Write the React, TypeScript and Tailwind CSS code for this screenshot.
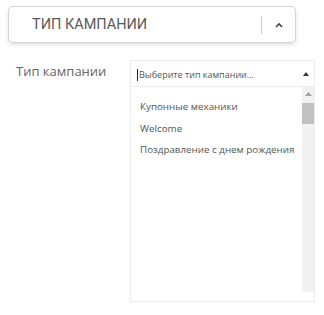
import { useState } from "react";

const options = [
  "Купонные механики",
  "Welcome",
  "Поздравление с днем рождения",
];

export default function App() {
  const [query, setQuery] = useState("");

  return (
    <div className="w-[324px] h-[315px] bg-white font-['Open_Sans',sans-serif] text-[#555]">
      {/* Заголовок секции */}
      <div className="pt-[6px] pl-[8px]">
        <div className="w-[288px] h-[37px] flex items-center border border-[#d4d4d4] rounded-[5px] shadow-[0_2px_4px_rgba(0,0,0,0.12)]">
          <span className="flex-1 pl-[23px] font-['Roboto',sans-serif] text-[14.5px] text-[#5a5a5a]">
            ТИП КАМПАНИИ
          </span>
          <div className="w-px h-[18px] bg-[#ccc]" />
          <div className="w-[33px] flex justify-center">
            <svg width="8" height="6" viewBox="0 0 8 6">
              <path d="M1 5 L4 2 L7 5" fill="none" stroke="#444" strokeWidth="1.6" />
            </svg>
          </div>
        </div>
      </div>

      {/* Поле и выпадающий список */}
      <div className="flex mt-[17px]">
        <div className="w-[130px] pl-[16px] pt-[2px] text-[13px] text-[#666]">
          Тип кампании
        </div>
        <div className="w-[185px] h-[242px] border border-[#ececec] flex flex-col">
          <div className="h-[26px] flex items-center border-b border-[#ececec] shrink-0">
            <input
              value={query}
              onChange={(e) => setQuery(e.target.value)}
              placeholder="Выберите тип кампании..."
              className="flex-1 min-w-0 ml-[6px] pl-[1px] text-[9px] outline-none placeholder:text-[#555] border-l border-[#222] h-[12px] leading-[12px] mt-[2px]"
            />
            <div className="w-[14px] flex justify-center mr-[1px]">
              <svg width="6" height="4" viewBox="0 0 6 4">
                <path d="M0 4 L3 0 L6 4 Z" fill="#333" />
              </svg>
            </div>
          </div>
          <div className="flex h-[205px]">
            <ul className="flex-1 pt-[10px] pl-[9px] text-[9.8px] text-[#555] whitespace-nowrap">
              {options.map((o) => (
                <li key={o} className="h-[21.5px] flex items-center">
                  {o}
                </li>
              ))}
            </ul>
            <div className="w-[12px] bg-[#f1f1f1] flex flex-col items-center">
              <div className="h-[14px] flex items-center">
                <svg width="7" height="4" viewBox="0 0 7 4">
                  <path d="M0 4 L3.5 0 L7 4 Z" fill="#a3a3a3" />
                </svg>
              </div>
              <div className="w-full h-[21px] bg-[#c1c1c1] mt-[2px]" />
            </div>
          </div>
        </div>
      </div>
    </div>
  );
}
